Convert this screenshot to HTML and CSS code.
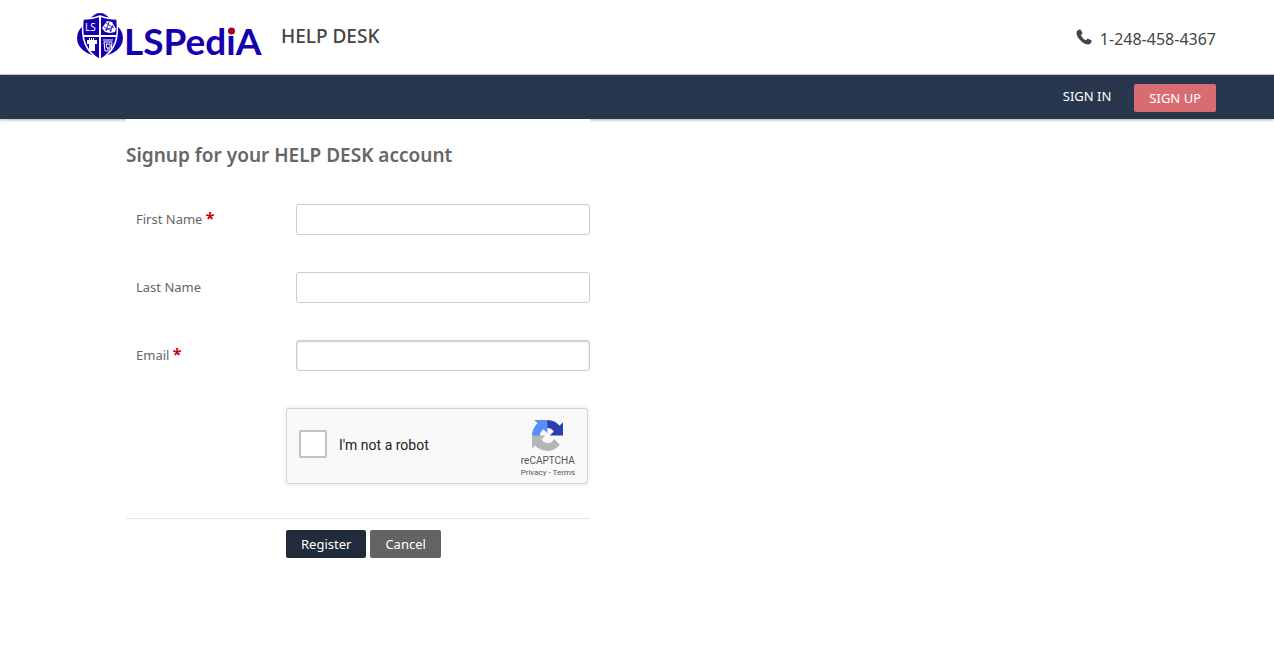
FILE: index.html
```html
<!DOCTYPE html>
<html lang="en">
  <head>
    <meta charset="UTF-8" />
    <meta name="viewport" content="width=device-width, initial-scale=1.0" />
    <title>HELP DESK : Sign up</title>
    <link rel="stylesheet" href="styles.css">
  </head>
  <body>
    <header class="header">
      <a href="#" class="brand">
        <svg class="logo" width="186" height="50" viewBox="0 0 186 50" role="img" aria-label="LSPediA">
          <!-- shield -->
          <ellipse cx="24" cy="26" rx="23" ry="18" fill="#1600ad" />
          <path d="M15 6c2-3 5-5 9-5s7 2 9 5z" fill="#1600ad" />
          <path d="M24 4c5 2 10 3 17 3 2 20-2 32-17 41C9 39 5 27 7 7c7 0 12-1 17-3z" fill="#1600ad" stroke="#fff" stroke-width="1.500" />
          <path d="M24 4v43M7 24h34" stroke="#fff" stroke-width="2" />
          <text x="9" y="19" class="logo-mark">LS</text>
          <path d="M26 16l5-7 5 1 4 7-1 3-5 1-5-1z" fill="#fff" />
          <path d="M30 11l6 4M28 15l8 4M33 10l-3 9M37 13l-3 7M29 18l9-3" stroke="#1600ad" stroke-width=".8" />
          <path d="M11 28h2v-2h1v2h1v-2h1v2h1v-2h1v2h3v4h-2v7h-6v-7h-2z" fill="#fff" />
          <path d="M27 28h10M28 30h8l-1 9h-6zM30 32h4v4h-3zM31 37h3" fill="none" stroke="#fff" />
          <text x="48" y="43" class="logo-text">LSPediA</text>
          <rect x="152" y="12" width="8" height="10" fill="#fff" />
          <circle cx="155.500" cy="19" r="3.500" fill="#a30020" />
        </svg>
        <span class="brand-name">HELP DESK</span>
      </a>
      <div class="phone">
        <svg width="16" height="16" viewBox="0 0 16 16" aria-hidden="true">
          <path d="M3.500.4L1.200 1.700C-.4 4 1 8 4.500 11.500S12 16.300 14.300 14.800L15.600 12.500c.2-.5 0-1-.4-1.200l-2.900-1.500c-.5-.2-.9-.1-1.200.3L10 11.300C8 10.500 5.600 8.100 4.800 6L6 4.900c.4-.3.500-.7.300-1.200L4.700.8c-.2-.4-.7-.6-1.200-.4z" fill="#444" />
        </svg>
        <span>1-248-458-4367</span>
      </div>
    </header>

    <nav class="nav">
      <a href="#" class="nav-link">SIGN IN</a>
      <a href="#" class="btn btn-signup">SIGN UP</a>
    </nav>

    <main class="content">
      <form class="signup">
        <h1 class="title">Signup for your HELP DESK account</h1>
        <div class="row">
          <label for="first-name">First Name <span class="required">*</span></label>
          <input type="text" id="first-name" class="field" />
        </div>
        <div class="row">
          <label for="last-name">Last Name</label>
          <input type="text" id="last-name" class="field" />
        </div>
        <div class="row">
          <label for="email">Email <span class="required">*</span></label>
          <input type="text" id="email" class="field field-inset" />
        </div>
        <div class="captcha">
          <input type="checkbox" id="robot" class="captcha-check" />
          <label for="robot" class="captcha-label">I'm not a robot</label>
          <div class="captcha-brand">
            <svg width="31" height="31" viewBox="0 0 64 64" aria-hidden="true">
              <path fill="#2a3eb1" d="M64 31.955l-.033-1.370V4.687l-7.160 7.160C50.948 4.674 42.033.093 32.050.093c-10.400 0-19.622 4.960-25.458 12.640l11.736 11.860a15.550 15.550 0 0 1 4.754-5.334c2.050-1.600 4.952-2.906 8.968-2.906.485 0 .860.057 1.135.163 4.976.393 9.288 3.140 11.828 7.124l-8.307 8.307L64 31.953" />
              <path fill="#5a8df5" d="M31.862.094l-1.370.033H4.594l7.160 7.160C4.580 13.147 0 22.060 0 32.046c0 10.400 4.960 19.622 12.640 25.458L24.500 45.768a15.550 15.550 0 0 1-5.334-4.754c-1.600-2.050-2.906-4.952-2.906-8.968 0-.485.057-.860.163-1.135.393-4.976 3.140-9.288 7.124-11.828l8.307 8.307L31.860.095" />
              <path fill="#b5b5b5" d="M.001 32.045l.033 1.370v25.898l7.160-7.160c5.860 7.173 14.774 11.754 24.760 11.754 10.400 0 19.622-4.960 25.458-12.640l-11.736-11.860a15.550 15.550 0 0 1-4.754 5.334c-2.050 1.600-4.952 2.906-8.968 2.906-.485 0-.860-.057-1.135-.163-4.976-.393-9.288-3.140-11.828-7.124l8.307-8.307c-10.522.040-22.400.066-27.295-.005" />
            </svg>
            <span class="captcha-name">reCAPTCHA</span>
            <span class="captcha-links"><a href="#">Privacy</a> - <a href="#">Terms</a></span>
          </div>
        </div>
        <div class="actions">
          <button type="submit" class="btn btn-register">Register</button>
          <button type="button" class="btn btn-cancel">Cancel</button>
        </div>
      </form>
    </main>
  </body>
</html>
```

FILE: styles.css
```css
* {
  box-sizing: border-box;
}
body {
  margin: 0;
  background-color: #fff;
  color: #666;
  font-family: "Segoe UI", "Noto Sans", "Open Sans", sans-serif;
  font-size: 13px;
}
a {
  color: inherit;
  text-decoration: none;
}

/* header */
.header {
  display: flex;
  justify-content: space-between;
  align-items: center;
  height: 75px;
  padding: 0 58px 0 76px;
  border-bottom: 1px solid #ccc;
  color: #444;
}
.brand {
  display: flex;
  align-items: center;
  gap: 19px;
}
.logo-text {
  font: 700 37px Lato, sans-serif;
  fill: #1600ad;
}
.logo-mark {
  font: 10px "Noto Sans", sans-serif;
  fill: #fff;
}
.brand-name {
  padding-bottom: 2px;
  font-size: 19px;
  font-weight: 500;
}
.phone {
  display: flex;
  align-items: center;
  gap: 8px;
  padding-top: 4px;
  font-size: 16px;
  line-height: 24px;
}
.phone svg {
  margin-bottom: 4px;
}

/* nav */
.nav {
  display: flex;
  justify-content: flex-end;
  align-items: center;
  gap: 23px;
  height: 44px;
  padding: 2px 58px 0;
  background-color: #28374d;
  box-shadow: 0 1px 3px rgba(0, 0, 0, 0.3);
  color: #fff;
}
.nav-link {
  padding-bottom: 4px;
}
.btn {
  height: 28px;
  padding: 0 15px;
  border: 0;
  border-radius: 2px;
  color: #fff;
  font-family: inherit;
  font-size: 13px;
  line-height: 28px;
  cursor: pointer;
}
.btn-signup {
  background-color: #d86c70;
}
.btn-register {
  background-color: #212b3b;
}
.btn-cancel {
  background-color: #636363;
}

/* form */
.content {
  padding: 0 126px;
}
.signup {
  position: relative;
  max-width: 464px;
  background-color: #fff;
}
.title {
  margin: 0;
  padding: 22px 0 35px;
  font-size: 19px;
  font-weight: 600;
  line-height: 28px;
}
.row {
  display: grid;
  grid-template-columns: 160px 1fr;
  align-items: center;
  margin-bottom: 37px;
}
.row label {
  padding: 0 0 2px 10px;
}
.row .field {
  margin-left: 10px;
}
.required {
  color: #c00;
  font-size: 16px;
  font-weight: 700;
  line-height: 16px;
}
.field {
  height: 31px;
  padding: 4px 8px;
  border: 1px solid #ccc;
  border-radius: 3px;
  font: inherit;
}
.field-inset {
  box-shadow: inset 0 1px 2px rgba(0, 0, 0, 0.2);
}

/* captcha */
.captcha {
  display: flex;
  align-items: center;
  width: 302px;
  height: 76px;
  margin-left: 160px;
  padding: 0 12px;
  border: 1px solid #d3d3d3;
  border-radius: 3px;
  background-color: #f9f9f9;
  box-shadow: 0 0 4px 1px rgba(0, 0, 0, 0.08);
  font-family: Roboto, sans-serif;
}
.captcha-check {
  appearance: none;
  width: 28px;
  height: 28px;
  margin: 0 12px 4px 0;
  border: 2px solid #c1c1c1;
  border-radius: 2px;
  background-color: #fff;
}
.captcha-label {
  flex: 1;
  padding-bottom: 2px;
  color: #222;
  font-size: 14px;
}
.captcha-brand {
  display: flex;
  flex-direction: column;
  align-items: center;
  padding-top: 7px;
  color: #555;
}
.captcha-name {
  padding-top: 3px;
  font-size: 10px;
  line-height: 13px;
}
.captcha-links {
  font-size: 8px;
  line-height: 12px;
}

.actions {
  display: flex;
  gap: 4px;
  margin-top: 34px;
  padding: 11px 0 0 160px;
  border-top: 1px solid #e5e5e5;
}
```
